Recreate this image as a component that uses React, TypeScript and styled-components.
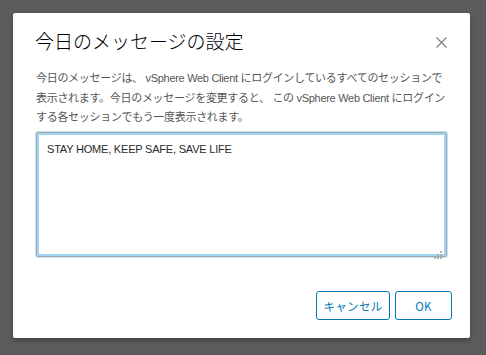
import React from 'react'
import styled, { createGlobalStyle } from 'styled-components'

const GlobalStyle = createGlobalStyle`
  html, body {
    margin: 0;
    padding: 0;
    background: #5c5c5c;
  }
  body {
    font-family: "Liberation Sans", "Noto Sans CJK JP", sans-serif;
  }
`

const Backdrop = styled.div`
  width: 486px;
  height: 355px;
  padding: 13px 0 0 13px;
  box-sizing: border-box;
`

const Dialog = styled.div`
  width: 457px;
  height: 325px;
  background: #ffffff;
  border-radius: 2px;
  box-shadow: 0 3px 5px rgba(0, 0, 0, 0.28);
  display: flex;
  flex-direction: column;
  box-sizing: border-box;
  padding: 14px 0 18px;
`

const Header = styled.div`
  display: flex;
  align-items: center;
  justify-content: space-between;
  padding: 0 18px 0 22px;
  height: 28px;
`

const Title = styled.h3`
  margin: 0;
  font-family: "Noto Sans CJK JP", "Liberation Sans", sans-serif;
  font-weight: 300;
  font-size: 19px;
  line-height: 28px;
  color: #000000;
`

const CloseButton = styled.button`
  width: 22px;
  height: 22px;
  padding: 0;
  margin-top: 2px;
  border: none;
  background: transparent;
  display: flex;
  align-items: center;
  justify-content: center;
  cursor: pointer;
`

const Body = styled.div`
  padding: 0 23px;
  margin-top: 14px;
`

const Description = styled.p`
  margin: 0;
  font-family: "Liberation Sans", "Noto Sans CJK JP", sans-serif;
  font-size: 11px;
  letter-spacing: -0.3px;
  line-height: 19.5px;
  color: #565656;
`

const MessageBox = styled.textarea`
  display: block;
  margin-top: 4px;
  width: 411px;
  height: 125px;
  box-sizing: border-box;
  resize: none;
  border: 1px solid #a8a8a8;
  border-radius: 2px;
  outline: none;
  box-shadow: 0 0 0 1px #c4e5f6, 0 0 0 2px #9fd4f2 inset;
  padding: 8px 10px;
  font-family: "Liberation Sans", "Noto Sans CJK JP", sans-serif;
  font-size: 11px;
  letter-spacing: -0.2px;
  line-height: 16px;
  color: #2a2a2a;
`

const BoxWrap = styled.div`
  position: relative;
`

const Grip = styled.div`
  position: absolute;
  right: 5px;
  bottom: 4px;
  width: 8px;
  height: 8px;
  pointer-events: none;
`

const Footer = styled.div`
  margin-top: auto;
  display: flex;
  justify-content: flex-end;
  gap: 5px;
  padding-right: 18px;
`

const OutlineButton = styled.button<{ $w: number }>`
  width: ${p => p.$w}px;
  height: 29px;
  box-sizing: border-box;
  border: 1px solid #0079b8;
  border-radius: 3px;
  background: #ffffff;
  color: #0079b8;
  font-family: "Noto Sans CJK JP", "Liberation Sans", sans-serif;
  font-size: 11.5px;
  letter-spacing: 0.3px;
  cursor: pointer;
  padding: 0;
`

const CloseIcon = () => (
  <svg width="11" height="11" viewBox="0 0 11 11">
    <path d="M0.5 0.5 L10.5 10.5 M10.5 0.5 L0.5 10.5" stroke="#7c7c7c" strokeWidth="1.1" fill="none" />
  </svg>
)

const GripIcon = () => (
  <svg width="8" height="8" viewBox="0 0 8 8">
    <rect x="6" y="0" width="2" height="2" fill="#b0b0b0" />
    <rect x="3" y="3" width="2" height="2" fill="#b0b0b0" />
    <rect x="6" y="3" width="2" height="2" fill="#b0b0b0" />
    <rect x="0" y="6" width="2" height="2" fill="#b0b0b0" />
    <rect x="3" y="6" width="2" height="2" fill="#b0b0b0" />
    <rect x="6" y="6" width="2" height="2" fill="#b0b0b0" />
  </svg>
)

const App: React.FC = () => {
  return (
    <>
      <GlobalStyle />
      <Backdrop>
        <Dialog>
          <Header>
            <Title>今日のメッセージの設定</Title>
            <CloseButton aria-label="閉じる">
              <CloseIcon />
            </CloseButton>
          </Header>
          <Body>
            <Description>
              今日のメッセージは、 vSphere Web Client にログインしているすべてのセッションで表示されます。今日のメッセージを変更すると、 この vSphere Web Client にログインする各セッションでもう一度表示されます。
            </Description>
            <BoxWrap>
              <MessageBox defaultValue="STAY HOME, KEEP SAFE, SAVE LIFE" />
              <Grip>
                <GripIcon />
              </Grip>
            </BoxWrap>
          </Body>
          <Footer>
            <OutlineButton $w={74}>キャンセル</OutlineButton>
            <OutlineButton $w={57}>OK</OutlineButton>
          </Footer>
        </Dialog>
      </Backdrop>
    </>
  )
}

export default App
